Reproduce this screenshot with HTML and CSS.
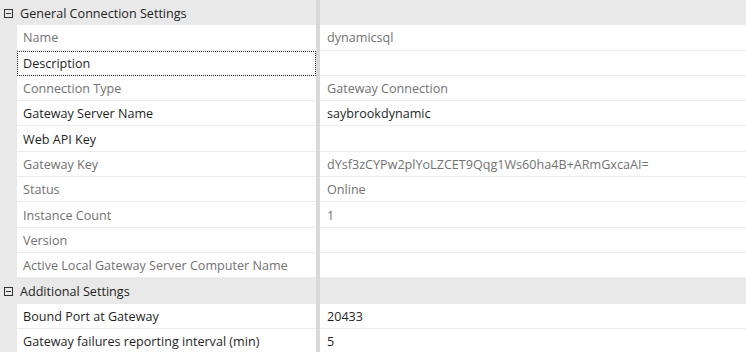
FILE: index.html
```html
<!DOCTYPE html>
<html lang="en">
<head>
    <meta charset="UTF-8">
    <title>Connection Properties</title>
    <link rel="stylesheet" href="styles.css">
</head>
<body>
    <div class="grid">
        <div class="row section">
            <div class="head"><span class="toggle"></span>General Connection Settings</div>
            <div class="divider"></div>
            <div class="fill"></div>
        </div>
        <div class="row">
            <div class="gutter"></div>
            <div class="label dim">Name</div>
            <div class="divider"></div>
            <div class="value dim">dynamicsql</div>
        </div>
        <div class="row">
            <div class="gutter"></div>
            <div class="label focus">Description</div>
            <div class="divider"></div>
            <div class="value"></div>
        </div>
        <div class="row">
            <div class="gutter"></div>
            <div class="label dim">Connection Type</div>
            <div class="divider"></div>
            <div class="value dim">Gateway Connection</div>
        </div>
        <div class="row">
            <div class="gutter"></div>
            <div class="label">Gateway Server Name</div>
            <div class="divider"></div>
            <div class="value">saybrookdynamic</div>
        </div>
        <div class="row">
            <div class="gutter"></div>
            <div class="label">Web API Key</div>
            <div class="divider"></div>
            <div class="value"></div>
        </div>
        <div class="row">
            <div class="gutter"></div>
            <div class="label dim">Gateway Key</div>
            <div class="divider"></div>
            <div class="value dim">dYsf3zCYPw2plYoLZCET9Qqg1Ws60ha4B+ARmGxcaAI=</div>
        </div>
        <div class="row">
            <div class="gutter"></div>
            <div class="label dim">Status</div>
            <div class="divider"></div>
            <div class="value dim">Online</div>
        </div>
        <div class="row">
            <div class="gutter"></div>
            <div class="label dim">Instance Count</div>
            <div class="divider"></div>
            <div class="value dim">1</div>
        </div>
        <div class="row">
            <div class="gutter"></div>
            <div class="label dim">Version</div>
            <div class="divider"></div>
            <div class="value dim"></div>
        </div>
        <div class="row">
            <div class="gutter"></div>
            <div class="label dim">Active Local Gateway Server Computer Name</div>
            <div class="divider"></div>
            <div class="value dim"></div>
        </div>
        <div class="row section">
            <div class="head"><span class="toggle"></span>Additional Settings</div>
            <div class="divider"></div>
            <div class="fill"></div>
        </div>
        <div class="row">
            <div class="gutter"></div>
            <div class="label">Bound Port at Gateway</div>
            <div class="divider"></div>
            <div class="value">20433</div>
        </div>
        <div class="row">
            <div class="gutter"></div>
            <div class="label">Gateway failures reporting interval (min)</div>
            <div class="divider"></div>
            <div class="value">5</div>
        </div>
    </div>
</body>
</html>
```
FILE: styles.css
```css
body {
    margin: 0;
    background: #e9e9e9;
    font-family: "Open Sans", "Noto Sans", sans-serif;
    font-size: 12.6px;
    color: #1f1f1f;
}

.grid {
    width: 746px;
    height: 352px;
    overflow: hidden;
}

.row {
    display: flex;
    height: 25.3px;
}

/* Section header */
.section {
    background: #e9e9e9;
}

.head {
    width: 316px;
    display: flex;
    align-items: center;
    padding: 1px 0 0 4px;
    box-sizing: border-box;
    color: #1f1f1f;
}

.toggle {
    position: relative;
    width: 9px;
    height: 9px;
    border: 1px solid #333;
    box-sizing: border-box;
    margin-right: 7px;
}

.toggle::after {
    content: "";
    position: absolute;
    left: 1px;
    right: 1px;
    top: 3px;
    height: 1px;
    background: #333;
}

.fill {
    flex: 1;
}

/* Property rows */
.gutter {
    width: 17px;
    background: #e9e9e9;
}

.label,
.value {
    display: flex;
    align-items: center;
    background: #fff;
    border-bottom: 1px solid #ebebeb;
    box-sizing: border-box;
    white-space: nowrap;
    padding-top: 1px;
}

.label {
    width: 299px;
    padding-left: 6px;
}

.value {
    flex: 1;
    padding-left: 7px;
}

.divider {
    width: 4px;
    background: #d9d9d9;
}

.dim {
    color: #727272;
}

.focus {
    outline: 1px dotted #333;
    outline-offset: -1px;
}
```
